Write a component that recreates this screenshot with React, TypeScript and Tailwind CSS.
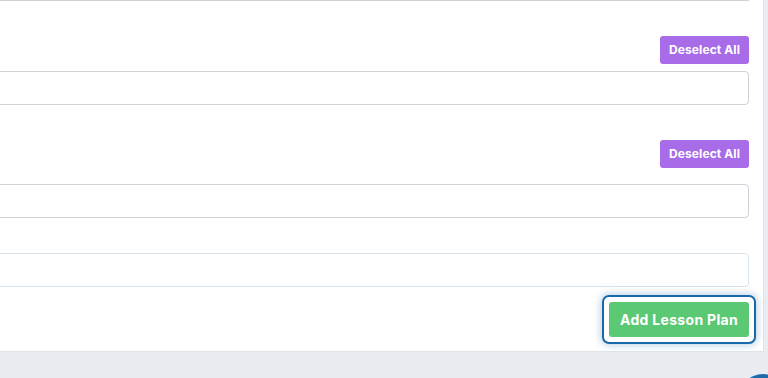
import React from "react";

function DeselectRow({ mt }: { mt: string }) {
  return (
    <div className={`flex justify-end ${mt}`}>
      <button className="h-[28px] w-[89px] rounded-[3px] bg-[#a86ce8] text-[12px] font-bold tracking-[0.1px] text-white">
        Deselect All
      </button>
    </div>
  );
}

export default function App() {
  return (
    <div
      className="relative h-[378px] w-[768px] overflow-hidden bg-[#e9edf2]"
      style={{ fontFamily: "Inter, 'Open Sans', sans-serif" }}
    >
      <div className="h-[352px] w-[764px] border-b border-r border-[#dfe4ea] bg-white pr-[14px]">
        <div className="-ml-[6px] flex flex-col">
          <div className="h-px w-full bg-[#cfd3d8]" />
          <DeselectRow mt="mt-[35px]" />
          <div className="mt-[7px] h-[34px] w-full rounded-[4px] border border-[#ced4da] bg-white" />
          <DeselectRow mt="mt-[35px]" />
          <div className="mt-[16px] h-[34px] w-full rounded-[4px] border border-[#ced4da] bg-white" />
          <div className="mt-[35px] h-[34px] w-full rounded-[4px] border border-[#d9e3ec] bg-white" />
          <div className="mt-[8px] flex justify-end">
            <div className="-mr-[7px] rounded-[7px] border-2 border-[#1769aa] bg-white p-[5px] shadow-[0_0_6px_2px_rgba(23,105,170,0.25)]">
              <button className="h-[35px] w-[140px] rounded-[3px] bg-[#5bc874] text-[14px] font-bold tracking-[0.3px] text-white">
                Add Lesson Plan
              </button>
            </div>
          </div>
        </div>
      </div>
      <div className="absolute left-[738px] top-[374px] h-[50px] w-[50px] rounded-full bg-[#1b6ca8]" />
    </div>
  );
}
